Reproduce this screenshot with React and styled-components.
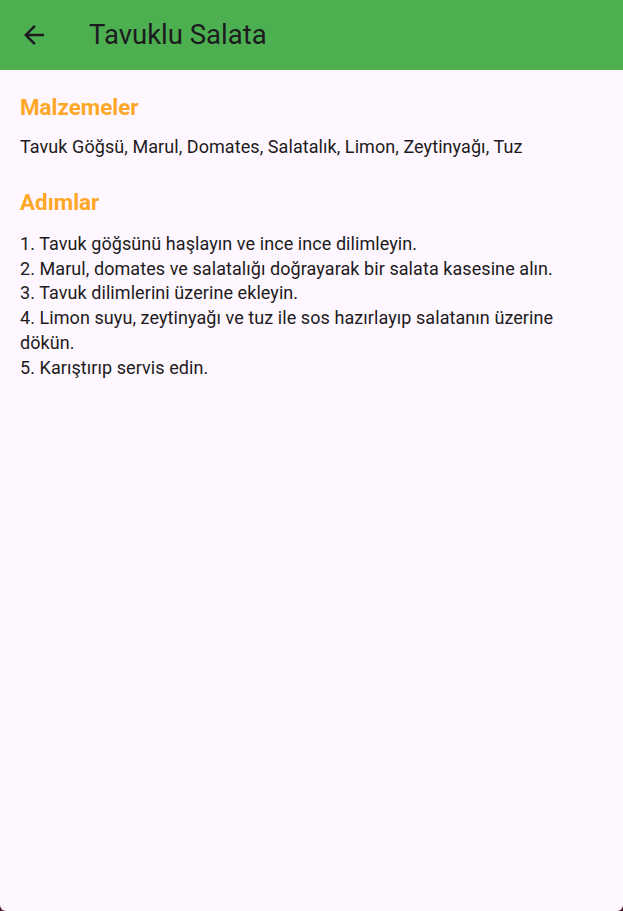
import React from "react";
import styled, { createGlobalStyle } from "styled-components";

const Global = createGlobalStyle`
  html, body { margin: 0; padding: 0; background: #4a1a2c; }
  body { font-family: Roboto, "Noto Sans", sans-serif; }
  #root { min-height: 100vh; }
`;

const Screen = styled.div`
  min-height: 911px;
  background: #fef7ff;
  border-radius: 0 0 6px 6px;
  overflow: hidden;
  display: flex;
  flex-direction: column;
`;

const AppBar = styled.header`
  height: 70px;
  background: #4caf50;
  display: flex;
  align-items: center;
  padding: 0 0 0 19px;
  box-sizing: border-box;
`;

const BackButton = styled.button`
  width: 30px;
  height: 30px;
  padding: 0;
  border: 0;
  background: none;
  display: flex;
  align-items: center;
  justify-content: center;
  color: #1d1b20;
  margin-right: 40px;
`;

const Title = styled.h1`
  margin: 0;
  font-family: Roboto, sans-serif;
  font-weight: 400;
  font-size: 27.5px;
  color: #1d1b20;
  line-height: 34px;
`;

const Body = styled.main`
  padding: 21px 20px 20px;
  display: flex;
  flex-direction: column;
`;

const Heading = styled.h2`
  margin: 0 0 ${(p) => p.$gap}px;
  font-family: Roboto, sans-serif;
  font-weight: 700;
  font-size: 22.4px;
  line-height: 32px;
  color: #ffa726;
`;

const Paragraph = styled.p`
  margin: 0 0 ${(p) => p.$after}px;
  font-family: Roboto, sans-serif;
  font-size: 18px;
  line-height: 24.75px;
  letter-spacing: 0.07px;
  color: #1d1b20;
  white-space: pre-line;
`;

const BackIcon = () => (
  <svg width="30" height="30" viewBox="0 0 24 24" fill="currentColor">
    <path d="M20 11H7.83l5.59-5.59L12 4l-8 8 8 8 1.41-1.41L7.83 13H20v-2z" />
  </svg>
);

const steps = [
  "1. Tavuk göğsünü haşlayın ve ince ince dilimleyin.",
  "2. Marul, domates ve salatalığı doğrayarak bir salata kasesine alın.",
  "3. Tavuk dilimlerini üzerine ekleyin.",
  "4. Limon suyu, zeytinyağı ve tuz ile sos hazırlayıp salatanın üzerine dökün.",
  "5. Karıştırıp servis edin.",
];

export default function App() {
  return (
    <>
      <Global />
      <Screen>
        <AppBar>
          <BackButton aria-label="Geri">
            <BackIcon />
          </BackButton>
          <Title>Tavuklu Salata</Title>
        </AppBar>
        <Body>
          <Heading $gap={11.5}>Malzemeler</Heading>
          <Paragraph $after={27}>
            Tavuk Göğsü, Marul, Domates, Salatalık, Limon, Zeytinyağı, Tuz
          </Paragraph>
          <Heading $gap={13.5}>Adımlar</Heading>
          <Paragraph $after={0}>{steps.join("\n")}</Paragraph>
        </Body>
      </Screen>
    </>
  );
}
